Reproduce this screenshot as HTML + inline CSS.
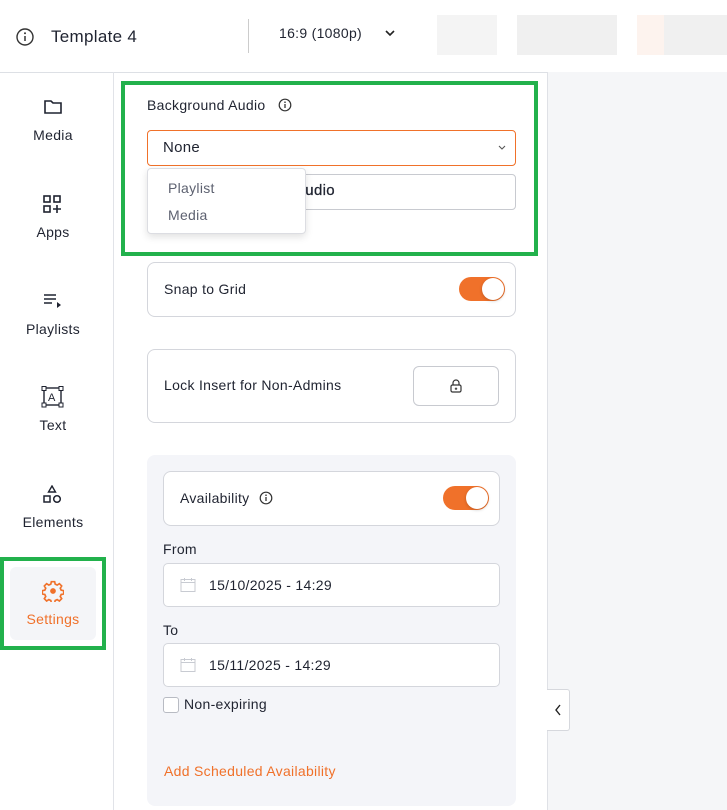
<!DOCTYPE html>
<html><head><style>
*{box-sizing:border-box;margin:0;padding:0}
body{width:727px;height:810px;overflow:hidden;background:#fff;font-family:"Liberation Sans",sans-serif;color:#1f2330;position:relative;letter-spacing:.3px}
.abs{position:absolute}
.card{position:absolute;border:1px solid #d4d6dc;border-radius:8px;background:#fff}
.t{font-size:14px}
.nav{position:absolute;left:0;width:106px;text-align:center;font-size:14px;color:#1f2330}
.tog{position:absolute;width:46px;height:24px;border-radius:12px;background:#f0712a}
.tog::after{content:"";position:absolute;right:1px;top:1px;width:22px;height:22px;border-radius:50%;background:#fff;box-shadow:0 1px 3px rgba(0,0,0,.2)}
</style></head><body>
<svg class="abs" style="left:15px;top:27px" width="20" height="20" viewBox="0 0 20 20"><circle cx="10" cy="10" r="8" fill="none" stroke="#333" stroke-width="1.4"/><line x1="10" y1="9" x2="10" y2="14" stroke="#333" stroke-width="1.5"/><circle cx="10" cy="6.3" r="1" fill="#333"/></svg>
<div class="abs" style="left:51px;top:27px;font-size:17px">Template 4</div>
<div class="abs" style="left:248px;top:19px;width:1px;height:34px;background:#ccc"></div>
<div class="abs" style="left:279px;top:25px;font-size:14px">16:9 (1080p)</div>
<svg class="abs" style="left:384px;top:28px" width="12" height="10"><path d="M2 3l4 4 4-4" fill="none" stroke="#222" stroke-width="1.6"/></svg>
<div class="abs" style="left:437px;top:15px;width:60px;height:40px;background:#f4f4f4"></div>
<div class="abs" style="left:517px;top:15px;width:100px;height:40px;background:#f0f0f0"></div>
<div class="abs" style="left:637px;top:15px;width:90px;height:40px;background:linear-gradient(90deg,#fdf3ee 0 30%,#f0f0f0 30%)"></div>
<div class="abs" style="left:0;top:72px;width:727px;height:1px;background:#dde0e5"></div>
<div class="abs" style="left:113px;top:72px;width:1px;height:738px;background:#e1e3e8"></div>
<div class="abs" style="left:547px;top:72px;width:180px;height:738px;background:#f5f6f8;border-left:1px solid #dfe1e6"></div>
<svg class="abs" style="left:43px;top:98px" width="20" height="18"><path d="M2 3h6l2 2h8v10H2z" fill="none" stroke="#1f2330" stroke-width="1.6"/></svg>
<div class="nav" style="top:127px">Media</div>
<svg class="abs" style="left:43px;top:195px" width="20" height="20"><rect x="1" y="1" width="6" height="6" fill="none" stroke="#1f2330" stroke-width="1.6"/><rect x="11" y="1" width="6" height="6" fill="none" stroke="#1f2330" stroke-width="1.6"/><rect x="1" y="11" width="6" height="6" fill="none" stroke="#1f2330" stroke-width="1.6"/><path d="M14 10v8M10 14h8" stroke="#1f2330" stroke-width="1.6"/></svg>
<div class="nav" style="top:224px">Apps</div>
<svg class="abs" style="left:43px;top:293px" width="20" height="16"><path d="M1 2h12M1 6h12M1 10h8" stroke="#1f2330" stroke-width="1.6"/><path d="M14 9l4 3-4 3z" fill="#1f2330"/></svg>
<div class="nav" style="top:321px">Playlists</div>
<svg class="abs" style="left:41px;top:386px" width="24" height="22"><rect x="3" y="2" width="17" height="17" fill="none" stroke="#1f2330" stroke-width="1.4"/><rect x="1" y="0.5" width="4" height="4" fill="#fff" stroke="#1f2330"/><rect x="18" y="0.5" width="4" height="4" fill="#fff" stroke="#1f2330"/><rect x="1" y="17" width="4" height="4" fill="#fff" stroke="#1f2330"/><rect x="18" y="17" width="4" height="4" fill="#fff" stroke="#1f2330"/><text x="7" y="15" font-size="11" font-family="Liberation Sans" fill="#1f2330">A</text></svg>
<div class="nav" style="top:417px">Text</div>
<svg class="abs" style="left:43px;top:485px" width="20" height="20"><path d="M9 1l3.5 6h-7z" fill="none" stroke="#1f2330" stroke-width="1.4"/><rect x="1" y="11" width="6" height="6" fill="none" stroke="#1f2330" stroke-width="1.5"/><circle cx="14" cy="14" r="3.3" fill="none" stroke="#1f2330" stroke-width="1.5"/></svg>
<div class="nav" style="top:514px">Elements</div>
<div class="abs" style="left:0;top:557px;width:106px;height:93px;border:4px solid #22b14c"></div>
<div class="abs" style="left:10px;top:567px;width:86px;height:73px;background:#f4f5f8;border-radius:6px"></div>
<svg class="abs" style="left:42px;top:580px" width="22" height="22" viewBox="0 0 20 20"><circle cx="10" cy="10" r="2.6" fill="#f0712a"/><path d="M8.5 1.5h3l.5 2.3 1.8.8 2-1.3 2.1 2.1-1.3 2 .8 1.8 2.3.5v3l-2.3.5-.8 1.8 1.3 2-2.1 2.1-2-1.3-1.8.8-.5 2.3h-3l-.5-2.3-1.8-.8-2 1.3-2.1-2.1 1.3-2-.8-1.8-2.3-.5v-3l2.3-.5.8-1.8-1.3-2 2.1-2.1 2 1.3 1.8-.8z" fill="none" stroke="#f0712a" stroke-width="1.5"/></svg>
<div class="nav" style="top:611px;color:#f0712a">Settings</div>
<div class="abs" style="left:121px;top:81px;width:417px;height:175px;border:4px solid #22b14c"></div>
<div class="abs t" style="left:147px;top:97px">Background Audio</div>
<svg class="abs" style="left:278px;top:98px" width="14" height="14"><circle cx="7" cy="7" r="5.8" fill="none" stroke="#333" stroke-width="1.2"/><line x1="7" y1="6" x2="7" y2="10" stroke="#333" stroke-width="1.3"/><circle cx="7" cy="4.2" r=".8" fill="#333"/></svg>
<div class="abs" style="left:147px;top:130px;width:369px;height:36px;border:1px solid #f0712a;border-radius:4px"></div>
<div class="abs" style="left:163px;top:139px;font-size:15px">None</div>
<svg class="abs" style="left:498px;top:145px" width="8" height="6"><path d="M1 1l3 3 3-3" fill="none" stroke="#555" stroke-width="1.1"/></svg>
<div class="abs" style="left:147px;top:174px;width:369px;height:36px;border:1px solid #c8cad0;border-radius:4px"></div>
<div class="abs" style="left:295px;top:182px;font-size:15px;color:#1f2330;-webkit-text-stroke:.3px #1f2330">Audio</div>
<div class="abs" style="left:147px;top:168px;width:159px;height:66px;background:#fff;border:1px solid #dcdde2;border-radius:4px;box-shadow:0 3px 8px rgba(0,0,0,.12)"></div>
<div class="abs t" style="left:168px;top:180px;color:#5d6170">Playlist</div>
<div class="abs t" style="left:168px;top:207px;color:#5d6170">Media</div>
<div class="card" style="left:147px;top:262px;width:369px;height:55px"></div>
<div class="abs t" style="left:164px;top:281px">Snap to Grid</div>
<div class="tog" style="left:459px;top:277px"></div>
<div class="card" style="left:147px;top:349px;width:369px;height:74px"></div>
<div class="abs t" style="left:164px;top:377px">Lock Insert for Non-Admins</div>
<div class="abs" style="left:413px;top:366px;width:86px;height:40px;border:1px solid #c8cad0;border-radius:6px"></div>
<svg class="abs" style="left:449px;top:378px" width="14" height="16"><path d="M4 7V5a3 3 0 0 1 6 0v2" fill="none" stroke="#333" stroke-width="1.2"/><rect x="2" y="7" width="10" height="7" rx="1.5" fill="none" stroke="#333" stroke-width="1.2"/><path d="M7 9.5v2.5M5.8 10.7h2.4" stroke="#333"/></svg>
<div class="abs" style="left:147px;top:455px;width:369px;height:351px;background:#f4f5f9;border-radius:8px"></div>
<div class="card" style="left:163px;top:471px;width:337px;height:55px"></div>
<div class="abs t" style="left:180px;top:490px">Availability</div>
<svg class="abs" style="left:259px;top:491px" width="14" height="14"><circle cx="7" cy="7" r="5.8" fill="none" stroke="#333" stroke-width="1.2"/><line x1="7" y1="6" x2="7" y2="10" stroke="#333" stroke-width="1.3"/><circle cx="7" cy="4.2" r=".8" fill="#333"/></svg>
<div class="tog" style="left:443px;top:486px"></div>
<div class="abs t" style="left:163px;top:541px">From</div>
<div class="card" style="left:163px;top:563px;width:337px;height:44px;border-radius:5px"></div>
<svg class="abs" style="left:180px;top:577px" width="16" height="16"><rect x="1" y="2.5" width="14" height="12" fill="none" stroke="#c8cbd2"/><path d="M1 5.5h14M4.5 1v3M11.5 1v3" stroke="#c8cbd2"/></svg>
<div class="abs t" style="left:209px;top:577px">15/10/2025 - 14:29</div>
<div class="abs t" style="left:163px;top:622px">To</div>
<div class="card" style="left:163px;top:643px;width:337px;height:44px;border-radius:5px"></div>
<svg class="abs" style="left:180px;top:657px" width="16" height="16"><rect x="1" y="2.5" width="14" height="12" fill="none" stroke="#c8cbd2"/><path d="M1 5.5h14M4.5 1v3M11.5 1v3" stroke="#c8cbd2"/></svg>
<div class="abs t" style="left:209px;top:657px">15/11/2025 - 14:29</div>
<div class="abs" style="left:163px;top:697px;width:16px;height:16px;border:1px solid #b8bbc3;border-radius:3px;background:#fff"></div>
<div class="abs t" style="left:184px;top:696px">Non-expiring</div>
<div class="abs t" style="left:164px;top:763px;color:#f0712a">Add Scheduled Availability</div>
<div class="abs" style="left:547px;top:689px;width:23px;height:42px;background:#fff;border:1px solid #d6d8dd;border-left:none;border-radius:0 3px 3px 0"></div>
<svg class="abs" style="left:554px;top:704px" width="8" height="12"><path d="M6 1L2 6l4 5" fill="none" stroke="#222" stroke-width="1.4"/></svg>
</body></html>
